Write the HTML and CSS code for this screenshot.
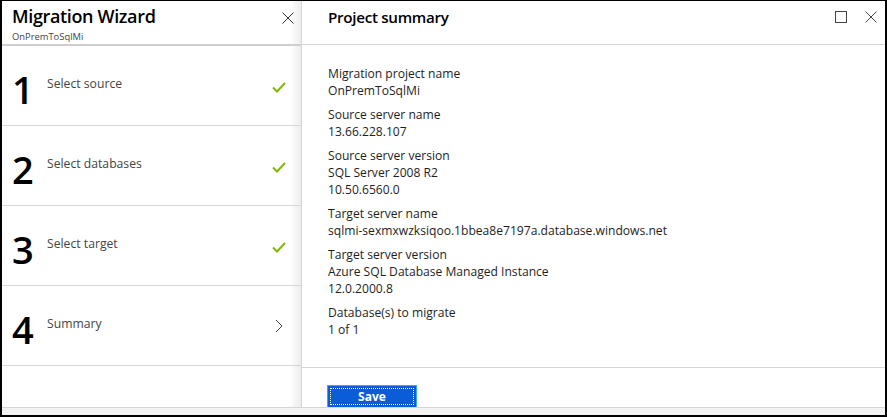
FILE: index.html
```html
<!DOCTYPE html>
<html>
<head>
<meta charset="utf-8">
<link rel="stylesheet" href="styles.css">
</head>
<body>
<div class="frame">
  <div class="panels">
    <aside class="wizard">
      <header class="wiz-head">
        <div class="wiz-titles">
          <h1 class="wiz-title">Migration Wizard</h1>
          <div class="wiz-sub">OnPremToSqlMi</div>
        </div>
        <svg class="close" width="12" height="12" viewBox="0 0 12 12"><path d="M0.5 0.5L11.5 11.5M11.5 0.5L0.5 11.5" stroke="#333" stroke-width="1" fill="none"/></svg>
      </header>
      <ol class="steps">
        <li class="step">
          <span class="num">1</span>
          <span class="label">Select source</span>
          <svg class="check" width="14" height="11" viewBox="0 0 14 11"><path d="M1 5.5L5 9.5L13 1" stroke="#7fba00" stroke-width="2" fill="none"/></svg>
        </li>
        <li class="step">
          <span class="num">2</span>
          <span class="label">Select databases</span>
          <svg class="check" width="14" height="11" viewBox="0 0 14 11"><path d="M1 5.5L5 9.5L13 1" stroke="#7fba00" stroke-width="2" fill="none"/></svg>
        </li>
        <li class="step">
          <span class="num">3</span>
          <span class="label">Select target</span>
          <svg class="check" width="14" height="11" viewBox="0 0 14 11"><path d="M1 5.5L5 9.5L13 1" stroke="#7fba00" stroke-width="2" fill="none"/></svg>
        </li>
        <li class="step">
          <span class="num">4</span>
          <span class="label">Summary</span>
          <svg class="chev" width="8" height="14" viewBox="0 0 8 14"><path d="M1 1L7 7L1 13" stroke="#444" stroke-width="1" fill="none"/></svg>
        </li>
      </ol>
    </aside>
    <main class="summary">
      <header class="sum-head">
        <h2 class="sum-title">Project summary</h2>
        <div class="win-icons">
          <svg width="12" height="12" viewBox="0 0 12 12"><rect x="0.5" y="0.5" width="11" height="11" stroke="#444" fill="none"/></svg>
          <svg width="12" height="12" viewBox="0 0 12 12"><path d="M0.5 0.5L11.5 11.5M11.5 0.5L0.5 11.5" stroke="#444" stroke-width="1" fill="none"/></svg>
        </div>
      </header>
      <div class="sum-body">
        <div class="field">
          <div>Migration project name</div>
          <div>OnPremToSqlMi</div>
        </div>
        <div class="field">
          <div>Source server name</div>
          <div>13.66.228.107</div>
        </div>
        <div class="field">
          <div>Source server version</div>
          <div>SQL Server 2008 R2</div>
          <div>10.50.6560.0</div>
        </div>
        <div class="field">
          <div>Target server name</div>
          <div>sqlmi-sexmxwzksiqoo.1bbea8e7197a.database.windows.net</div>
        </div>
        <div class="field">
          <div>Target server version</div>
          <div>Azure SQL Database Managed Instance</div>
          <div>12.0.2000.8</div>
        </div>
        <div class="field">
          <div>Database(s) to migrate</div>
          <div>1 of 1</div>
        </div>
      </div>
      <footer class="sum-foot">
        <button class="save">Save</button>
      </footer>
    </main>
  </div>
  <div class="bottom-strip"></div>
</div>
</body>
</html>
```
FILE: styles.css
```css
* { box-sizing: border-box; }
html, body { margin: 0; padding: 0; background: #000; }
body { font-family: "Segoe UI", "Open Sans", "Noto Sans", sans-serif; color: #1e1e1e; }
.frame {
  width: 887px;
  height: 417px;
  border: 2px solid #000;
  border-top-width: 1px;
  background: #fff;
  display: flex;
  flex-direction: column;
  overflow: hidden;
}
.panels { display: flex; flex: 1; min-height: 0; }
.wizard {
  width: 300px;
  border-right: 1px solid #d6d6d6;
  background: linear-gradient(to right, #fff 0, #fff 288px, #ececec 299px);
  display: flex;
  flex-direction: column;
}
.wiz-head {
  height: 45px;
  border-bottom: 2px solid #cfcfcf;
  display: flex;
  justify-content: space-between;
  align-items: flex-start;
  padding: 2px 7px 0 10px;
}
.wiz-title { margin: 0; font-size: 18px; font-weight: 600; line-height: 26px; color: #000; letter-spacing: -0.35px; }
.wiz-sub { font-size: 9.4px; line-height: 12px; color: #444; margin-top: 2px; }
.close { margin-top: 9px; }
.steps { list-style: none; margin: 0; padding: 0; }
.step {
  height: 80px;
  border-bottom: 1px solid #d6d6d6;
  display: flex;
  align-items: center;
  padding: 0 15px 0 10px;
}
.num { font-size: 38px; font-weight: 600; color: #000; width: 35px; line-height: 38px; margin-top: 7px; }
.label { flex: 1; font-size: 12.2px; color: #444; margin-top: -5px; }
.check { margin-top: 4px; }
.chev { margin-right: 3px; }
.summary { flex: 1; display: flex; flex-direction: column; min-width: 0; }
.sum-head {
  height: 44px;
  border-bottom: 1px solid #d6d6d6;
  display: flex;
  justify-content: space-between;
  align-items: flex-start;
  padding: 3px 8px 0 26px;
}
.sum-title { margin: 0; font-size: 15.2px; font-weight: 600; line-height: 26px; color: #000; letter-spacing: -0.3px; }
.win-icons { display: flex; gap: 18px; margin-top: 7px; }
.sum-body { flex: 1; padding: 21px 26px 0; font-size: 12.1px; line-height: 16.8px; color: #1e1e1e; }
.field { margin-bottom: 7.5px; }
.sum-foot {
  height: 40px;
  border-top: 1px solid #d6d6d6;
  padding: 16px 0 0 25px;
}
.save {
  width: 90px;
  height: 23px;
  background: #0b5cd9;
  color: #fff;
  font-family: inherit;
  font-size: 12px;
  font-weight: 700;
  border: 1px solid #33aaee;
  outline: 1px dotted #fff;
  outline-offset: -4px;
  padding: 0;
}
.bottom-strip { height: 8px; border-top: 1px solid #d6d6d6; background: #f3f3f3; }
```
